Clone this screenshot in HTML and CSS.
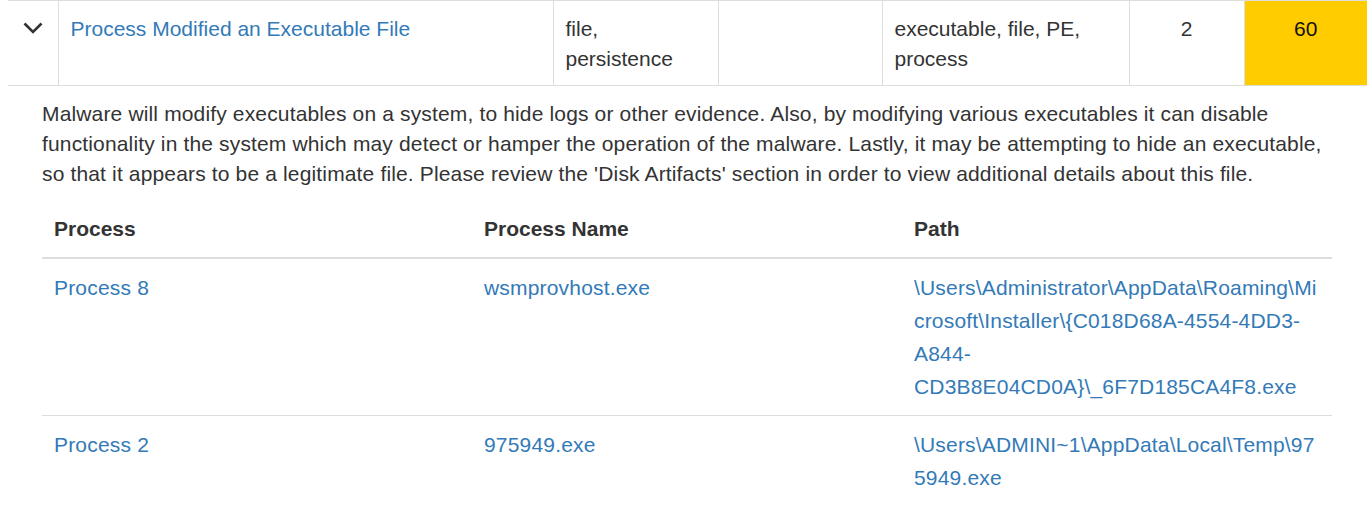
FILE: index.html
```html
<!DOCTYPE html>
<html lang="en">
<head>
<meta charset="utf-8">
<title>Signature detail</title>
<link rel="stylesheet" href="styles.css">
</head>
<body>
<div class="wrap">
  <table class="sigs">
    <colgroup>
      <col class="c-toggle">
      <col class="c-name">
      <col class="c-cat">
      <col class="c-att">
      <col class="c-tags">
      <col class="c-count">
      <col class="c-score">
    </colgroup>
    <tbody>
      <tr class="sig-row">
        <td class="toggle">
          <svg class="chev" width="20" height="14" viewBox="0 0 20 14" aria-hidden="true"><polyline points="1.5,2.5 10,11 18.5,2.5" fill="none" stroke="#333" stroke-width="2.6" stroke-linejoin="miter" stroke-linecap="butt"/></svg>
        </td>
        <td><a class="link" href="#">Process Modified an Executable File</a></td>
        <td>file,<br>persistence</td>
        <td></td>
        <td>executable, file, PE, process</td>
        <td class="center">2</td>
        <td class="center score">60</td>
      </tr>
      <tr class="detail-row">
        <td colspan="7" class="detail">
          <p class="desc">Malware will modify executables on a system, to hide logs or other evidence. Also, by modifying various executables it can disable functionality in the system which may detect or hamper the operation of the malware. Lastly, it may be attempting to hide an executable, so that it appears to be a legitimate file. Please review the 'Disk Artifacts' section in order to view additional details about this file.</p>
          <table class="procs">
            <thead>
              <tr><th>Process</th><th>Process Name</th><th>Path</th></tr>
            </thead>
            <tbody>
              <tr>
                <td><a class="link" href="#">Process 8</a></td>
                <td><a class="link" href="#">wsmprovhost.exe</a></td>
                <td class="path"><a class="link" href="#">\Users\Administrator\AppData\Roaming\Microsoft\Installer\{C018D68A-4554-4DD3-A844-CD3B8E04CD0A}\_6F7D185CA4F8.exe</a></td>
              </tr>
              <tr>
                <td><a class="link" href="#">Process 2</a></td>
                <td><a class="link" href="#">975949.exe</a></td>
                <td class="path"><a class="link" href="#">\Users\ADMINI~1\AppData\Local\Temp\975949.exe</a></td>
              </tr>
            </tbody>
          </table>
        </td>
      </tr>
    </tbody>
  </table>
</div>
</body>
</html>
```
FILE: styles.css
```css
html, body {
  margin: 0;
  padding: 0;
  background: #fff;
}
body {
  font-family: "Liberation Sans", Arial, Helvetica, sans-serif;
  font-size: 21px;
  color: #333;
}
.wrap {
  padding-left: 8px;
  width: 1359px;
}
.link {
  color: #337ab7;
  text-decoration: none;
}
.sigs {
  width: 1359px;
  border-collapse: collapse;
  table-layout: fixed;
}
.c-toggle { width: 50px; }
.c-name { width: 495px; }
.c-cat { width: 165px; }
.c-att { width: 164px; }
.c-tags { width: 247px; }
.c-count { width: 115px; }
.c-score { width: 123px; }

.sig-row td {
  border-top: 1px solid #ddd;
  border-bottom: 1px solid #ddd;
  border-left: 1px solid #ddd;
  padding: 13px 12px 11px;
  line-height: 30px;
  vertical-align: top;
}
.sig-row td:first-child {
  border-left: none;
}
.sig-row td.toggle {
  text-align: center;
  padding: 12px 0;
}
.chev {
  display: inline-block;
  vertical-align: middle;
  margin-top: -3px;
}
.center {
  text-align: center;
}
.sig-row td.score {
  background: #ffcc00;
  color: #111;
}
.detail {
  padding: 13px 35px 0 34px;
}
.desc {
  margin: 0 0 11px;
  line-height: 30px;
  letter-spacing: 0.15px;
}
.procs {
  width: 100%;
  border-collapse: collapse;
  table-layout: fixed;
}
.procs th,
.procs td {
  text-align: left;
  padding: 12px;
  line-height: 33px;
  vertical-align: top;
}
.procs th {
  font-weight: bold;
  border-bottom: 2px solid #ddd;
}
.procs td {
  border-top: 1px solid #ddd;
  letter-spacing: 0.18px;
}
.procs tbody tr:first-child td {
  border-top: none;
}
.path {
  overflow-wrap: break-word;
  word-wrap: break-word;
}
```
